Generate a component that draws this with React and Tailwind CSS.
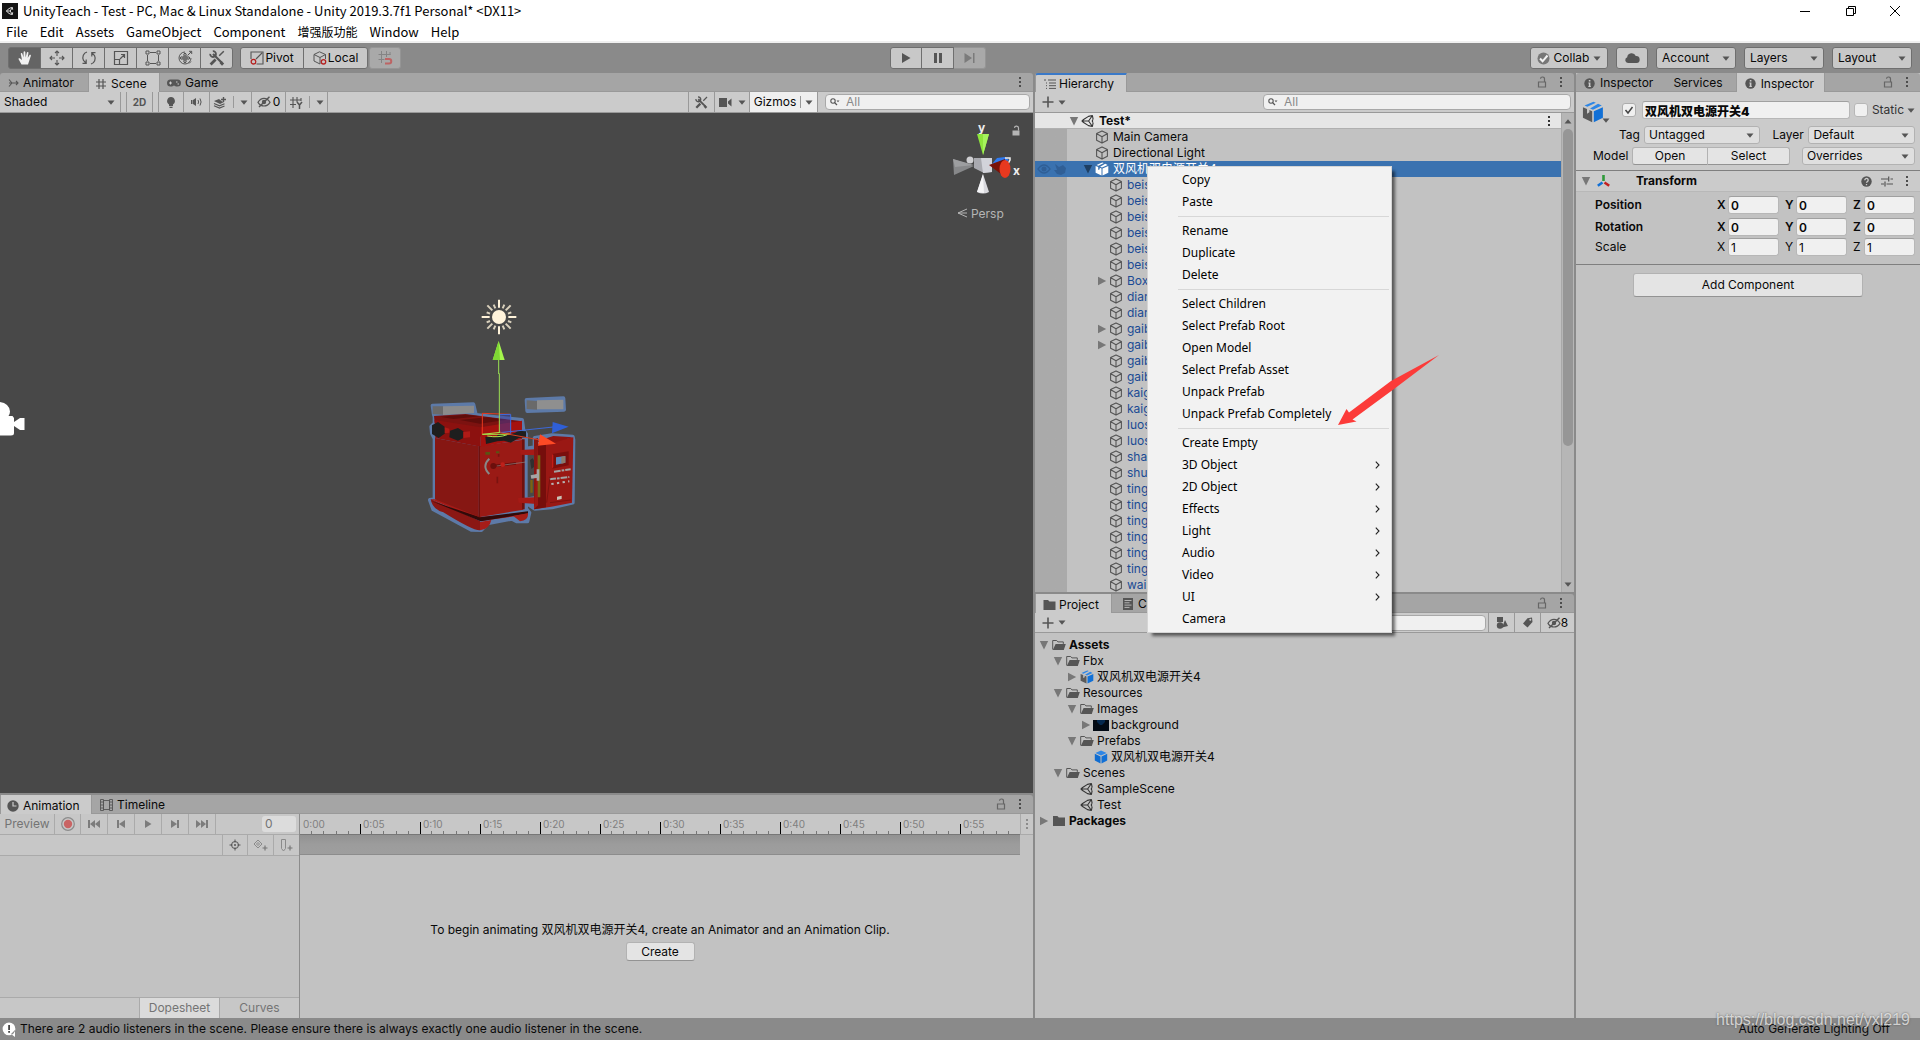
import React from "react";

/* ---------- icons ---------- */
const Svg = ({ w = 16, h = 16, box, children, className = "" }) => (
  <svg width={w} height={h} viewBox={box || `0 0 ${w} ${h}`} fill="none" className={"shrink-0 " + className} aria-hidden="true">
    {children}
  </svg>
);
const Caret = ({ className = "" }) => (
  <Svg w={8} h={5} className={className}><path d="M0.5 0.5h7L4 4.8z" fill="#555" /></Svg>
);
const Fold = ({ open }) =>
  open ? <Svg w={10} h={10}><path d="M0.8 1h8.4L5 9.5z" fill="#777" /></Svg>
       : <Svg w={10} h={10}><path d="M1 0.8v8.4L9.2 5z" fill="#777" /></Svg>;
const Kebab = ({ color = "#4d4d4d" }) => (
  <Svg w={4} h={12}><path d="M1 1h2v2H1zM1 5h2v2H1zM1 9h2v2H1z" fill={color} /></Svg>
);
const Lock = ({ color = "#666" }) => (
  <Svg w={10} h={12}><path d="M1.5 6h7v5h-7zM7.5 6V3.2a2 2 0 0 0-4-.4" stroke={color} strokeWidth="1.2" /></Svg>
);
const Cube = () => (
  <Svg w={14} h={14}><path d="M7 .9l5.4 2.7v6.6L7 13.1 1.6 10.2V3.6zM1.8 3.8L7 6.7l5.2-2.9M7 6.7v6.2" stroke="#555" strokeWidth="1.1" strokeLinejoin="round" /></Svg>
);
const PrefabCube = () => (
  <Svg w={14} h={14}>
    <path d="M7 .5l5.6 2.4L7 5.6 1.4 2.9z" fill="#2d86e6" />
    <path d="M.8 3.7l5.7 2.7v7.2L.8 10.6z" fill="#0f6cd0" /><path d="M13.2 3.7L7.5 6.4v7.2l5.7-3z" fill="#1170d6" />
  </Svg>
);
const ModelCube = ({ size = 14, dark = "#5a5a5a", blue = "#1170d6", light = "#2d86e6" }) => (
  <Svg w={size} h={size} box="0 0 14 14">
    <path d="M5.4 1.2L7.3.4l1.5.7-5.4 2.6-1.8-.8zM10.2 1.7l2.4 1.2L7 5.6l-1.9-.9z" fill={light} />
    <path d="M.6 3.9l2.6 1.2v3l1.5-.9V5.8l1.8.8v7L.6 10.7z" fill={dark} />
    <path d="M13.3 3.9L7.5 6.6v7l5.8-2.9z" fill={blue} />
  </Svg>
);
const UnityIcon = ({ color = "#333" }) => (
  <Svg w={14} h={14}>
    <path d="M12.1 5.2l-.7-3.7-3.9.9L2.6 5.5 1 7l1.6 1.5 4.9 3.1 3.9.9.7-3.7M11.4 1.5L7.6 7l3.8 5.5M7.6 7H1M12.1 5.2L11.2 7l.9 1.8" stroke={color} strokeWidth="1.1" strokeLinejoin="round" />
  </Svg>
);
const FolderOpen = () => (
  <Svg w={14} h={12}><path d="M.7 10.5V1.5h4l1.2 1.4h5.4v2" stroke="#555" strokeWidth="1" /><path d="M3.6 5h10.2l-2 6H.8z" fill="#555" /></Svg>
);
const Folder = () => (
  <Svg w={14} h={12}><path d="M1 1h4.4l1.4 1.6H13V11H1z" fill="#555" /></Svg>
);
const Thumb = () => (
  <Svg w={16} h={11}><path d="M0 0h16v11H0z" fill="#020a14" /><path d="M4 0h8v2l-3 3H7L4 2z" fill="#04284e" /></Svg>
);
const SearchGlyph = () => (
  <Svg w={10} h={8}><circle cx="3" cy="3" r="2.2" stroke="#555" strokeWidth="1.1" /><path d="M4.6 4.6L7 7" stroke="#555" strokeWidth="1.3" /><path d="M6.5 2.5h3L8 4.3z" fill="#555" /></Svg>
);
const Plus = () => <Svg w={12} h={12}><path d="M6 .5v11M.5 6h11" stroke="#555" strokeWidth="1.6" /></Svg>;
const ToolsIcon = ({ size = 16 }) => (
  <Svg w={size} h={size} box="0 0 16 16">
    <path d="M4 4l8.8 8.8" stroke="#555" strokeWidth="2.2" /><path d="M1.2 3.8A2.9 2.9 0 1 0 3.8 1.2" stroke="#555" strokeWidth="1.8" />
    <path d="M14.8 1.2l-4.6 4.6" stroke="#555" strokeWidth="1.5" /><path d="M1.6 14.4l5-5" stroke="#555" strokeWidth="2.8" />
    <path d="M11.5 12l2.6 2.6" stroke="#555" strokeWidth="3" />
  </Svg>
);
const EyeOff = () => (
  <Svg w={14} h={12}><path d="M1 6.4C2.6 3.6 4.8 2.4 7 2.4s4.400 1.200 6 4C11.400 9 9.200 10 7 10S2.600 9 1 6.400z" stroke="#555" strokeWidth="1.200" /><circle cx="7" cy="6" r="2.200" fill="#555" /><path d="M2 11L12.500.8" stroke="#555" strokeWidth="1.500" /></Svg>
);
const Info = () => (
  <Svg w={11} h={11}><circle cx="5.5" cy="5.5" r="5.2" fill="#555" /><path d="M4.8 2h1.600v1.500H4.800zM4.400 4.600h2v3.600h.6v.9H4.200v-.9h.6V5.500h-.4z" fill="#ccc" /></Svg>
);

/* ---------- shared pieces ---------- */
const TabTools = ({ lock = true }) => (
  <div className="ml-auto flex items-center gap-3 pr-[11px]">
    {lock && <button aria-label="Lock"><Lock /></button>}
    <button aria-label="Panel menu"><Kebab /></button>
  </div>
);
const TabBar = ({ children }) => (
  <div role="tablist" className="flex h-[19px] shrink-0 items-stretch rounded-t-[3px] bg-[#a5a5a5]">{children}</div>
);
const Tab = ({ icon, label, active, className = "" }) => (
  <button
    role="tab"
    aria-selected={!!active}
    className={(active ? "border-x border-[#999] bg-[#cbcbcb] " : "border-b border-b-[#999] ") + "flex items-center pt-0.5 leading-4 whitespace-nowrap " + className}
  >
    {icon}{label}
  </button>
);
const Fill = ({ children }) => <div className="flex flex-1 border-b border-[#999]">{children}</div>;
const Search = ({ className = "", label, placeholder = "All" }) => (
  <label className={"flex h-4 items-center gap-1.5 rounded border border-[#a8a8a8] bg-[#f0f0f0] px-1 " + className}>
    <SearchGlyph />
    <input aria-label={label} placeholder={placeholder} className="w-0 min-w-0 flex-1 bg-transparent leading-[14px] outline-none placeholder:text-[#8a8a8a]" />
  </label>
);
const Drop = ({ label, value, className = "", look = "rounded-[3px] border border-[#b2b2b2] bg-[#dfdfdf]" }) => (
  <div className={"relative flex items-center " + look + " " + className}>
    <select aria-label={label} defaultValue={value} className="h-full w-full appearance-none bg-transparent pl-1 leading-4 outline-none">
      <option>{value}</option>
    </select>
    <Caret className="pointer-events-none absolute right-[5px]" />
  </div>
);

/* ---------- window chrome ---------- */
const Chrome = () => (
  <header className="shrink-0 border-b-2 border-[#f0f0f0] bg-white font-['Noto_Sans_CJK_SC',sans-serif] text-[13px] text-black">
    <div className="flex h-[22px] items-center pl-0.5">
      <Svg w={16} h={16}>
        <path d="M0 0h16v16H0z" fill="#151515" />
        <path d="M10.700 6.700l-.4-2.200-2.300.5L5.500 6.700 4.500 8l1 1.300L8 11l2.300.5.4-2.200M10.300 4.500L8.200 8l2.100 3.500M8.200 8H4.500" stroke="#ddd" strokeWidth="1" />
      </Svg>
      <span className="ml-[5px] flex-1 leading-4 whitespace-nowrap">UnityTeach - Test - PC, Mac &amp; Linux Standalone - Unity 2019.3.7f1 Personal* &lt;DX11&gt;</span>
      <div className="flex">
        <button aria-label="Minimize" className="flex w-[46px] justify-center"><Svg w={10} h={10}><path d="M0 5.500h10" stroke="#000" /></Svg></button>
        <button aria-label="Restore" className="flex w-[46px] justify-center"><Svg w={10} h={10}><path d="M.5 2.500h7v7h-7zM2.500 2.500v-2h7v7h-2" stroke="#000" /></Svg></button>
        <button aria-label="Close" className="flex w-[46px] justify-center pr-1"><Svg w={10} h={10}><path d="M0 0l10 10M10 0L0 10" stroke="#000" /></Svg></button>
      </div>
    </div>
    <nav className="flex h-[19px] items-center gap-3 pl-1.5">
      {["File", "Edit", "Assets", "GameObject", "Component", "增强版功能", "Window", "Help"].map((m) => (
        <button key={m} className={(m === "增强版功能" ? "text-[12px] " : "") + "leading-4"}>{m}</button>
      ))}
    </nav>
  </header>
);

/* ---------- main toolbar ---------- */
const toolIcons = [
  ["Hand tool", <path key="a" d="M4.500 14.500L1.600 9.300c-.4-1 .8-1.500 1.500-.7L5 10 3.800 4c-.1-1.100 1.300-1.300 1.600-.3L6.500 7.500 6.600 2c.1-1 1.600-1 1.700 0l.3 5.400L9.900 2.600c.3-1 1.700-.7 1.500.4l-.7 5 1.800-2.900c.6-.8 1.700-.2 1.300.8L12 11.500l-1 3z" fill="#f2f2f2" />],
  ["Move tool", <path key="a" d="M8 1v5M8 10v5M1 8h5M10 8h5M6 3l2-2 2 2M6 13l2 2 2-2M3 6L1 8l2 2M13 6l2 2-2 2" stroke="#555" strokeWidth="1.100" />],
  ["Rotate tool", <path key="a" d="M6 2C2.500 3 .8 7 2.500 10.500L5 13M5.200 9.500V13.300H1.500M10 14c3.500-1 5.200-5 3.500-8.500L11 3M10.800 6.500V2.700h3.700" stroke="#555" strokeWidth="1.200" />],
  ["Scale tool", <path key="a" d="M1.500 1.500h13v13h-13zM1.500 9.500h5v5M7 9l4.500-4.500M8 4.500h3.500V8" stroke="#555" strokeWidth="1.200" />],
  ["Rect tool", <path key="a" d="M1 1h3v3H1zM12 1h3v3h-3zM1 12h3v3H1zM12 12h3v3h-3zM5 2.500h6M5 13.500h6M2.500 5v6M13.500 5v6" stroke="#555" strokeWidth="1" />],
  ["Transform tool", <path key="a" d="M14 8A6 6 0 1 1 8 2M8 3v10M3 8h10M6.300 4.600L8 3l1.700 1.600M6.300 11.400L8 13l1.700-1.600M4.600 6.300L3 8l1.600 1.700M11.400 6.300L13 8l-1.600 1.700M6 6h4v4H6zM10.500 5.500l4-4M12 1.300h2.700V4M12 13.500l2-2" stroke="#555" strokeWidth="1" />],
];
const tb = "flex h-[22px] items-center justify-center border border-[#6f6f6f] bg-[#c8c8c8] ";
const Toolbar = () => (
  <div className="grid h-[30px] shrink-0 grid-cols-[1fr_auto_1fr] items-center bg-[#8a8a8a]">
    <div className="flex items-center pl-2">
      {toolIcons.map(([name, shape], i) => (
        <button key={name} aria-label={name} className={(i === 0 ? "rounded-l-[3px] bg-[#646464] " : "-ml-px bg-[#c8c8c8] ") + "flex h-[22px] w-[33px] items-center justify-center border border-[#6f6f6f]"}>
          <Svg>{shape}</Svg>
        </button>
      ))}
      <button aria-label="Custom tools" className={tb + "-ml-px w-[33px] rounded-r-[3px]"}><ToolsIcon /></button>
      <button className={tb + "ml-[7px] w-[64px] gap-px rounded-l-[3px]"}>
        <Svg w={14} h={14}><path d="M1 8V1h12v12H6.500M6 8l6-6" stroke="#555" strokeWidth="1.100" /><circle cx="3.500" cy="10.700" r="2.300" stroke="#b52222" strokeWidth="1.300" /></Svg>Pivot
      </button>
      <button className={tb + "-ml-px w-[65px] gap-px rounded-r-[3px]"}>
        <Svg w={14} h={14}><path d="M7 13L1 10V3.500L6.500.8l6 2.700V8M1 3.500l6 3 5.500-3M7 6.500V13" stroke="#555" strokeWidth="1" /><circle cx="10.500" cy="10.800" r="2.200" stroke="#b52222" strokeWidth="1.300" /></Svg>Local
      </button>
      <button aria-label="Grid snapping" className="ml-px flex h-[22px] w-8 items-center justify-center rounded-[3px] border border-[#959595] bg-[#a9a9a9]">
        <Svg><path d="M1.500 4.500h12M1.500 9.500h6M4.500 1v12M9.500 1v6M13 2v3" stroke="#848484" /><path d="M8 9h4a2 2 0 0 1 0 4.500H8" stroke="#bd6464" strokeWidth="2" /></Svg>
      </button>
    </div>
    <div className="mr-11 flex">
      <button aria-label="Play" className={tb + "w-8 rounded-l-[3px]"}><Svg w={10} h={12}><path d="M1 1l8.500 5L1 11z" fill="#555" /></Svg></button>
      <button aria-label="Pause" className={tb + "-ml-px w-[33px]"}><Svg w={10} h={12}><path d="M1 1h3v10H1zM6 1h3v10H6z" fill="#555" /></Svg></button>
      <button aria-label="Step" className="flex h-[22px] w-8 items-center justify-center rounded-r-[3px] border border-l-0 border-[#959595] bg-[#a9a9a9]"><Svg w={11} h={12}><path d="M.5 1l7.500 5-7.500 5zM9 1h1.500v10H9z" fill="#7b7b7b" /></Svg></button>
    </div>
    <div className="flex items-center justify-end gap-2 pr-2">
      <button className={tb + "w-[78px] gap-1 rounded-[3px]"}>
        <Svg w={13} h={13}><circle cx="6.500" cy="6.500" r="6" fill="#777" /><path d="M3 6.500l2.600 2.800L10.500 3.500" stroke="#f2f2f2" strokeWidth="2" /></Svg>Collab<Caret />
      </button>
      <button aria-label="Cloud services" className={tb + "w-8 rounded-[3px]"}>
        <Svg w={16} h={12}><path d="M4 11a3 3 0 0 1-.8-5.800A4.500 4.500 0 0 1 11.800 4 3.500 3.500 0 0 1 12.500 11z" fill="#555" /></Svg>
      </button>
      {["Account", "Layers", "Layout"].map((t) => (
        <button key={t} className={tb + "w-20 justify-between rounded-[3px] px-[5px]"}><span className="flex-1 text-left">{t}</span><Caret /></button>
      ))}
    </div>
  </div>
);

/* ---------- scene ---------- */
const Device = () => (
  <Svg w={200} h={270} box="0 0 600 810" className="absolute top-[167px] left-[400px]">
    {/* sun gizmo */}
    <circle cx="297" cy="111" r="21" fill="#fff3da" />
    <path d="M297 59v24M297 139v24M245 111h24M325 111h24" stroke="#fff3da" strokeWidth="6" />
    <path d="M262 76l15 15M317 131l15 15M332 76l-15 15M277 131l-15 15M281 74l5 11M313 74l-5 11M281 148l5-11M313 148l-5-11M260 97l10 4M334 97l-10 4M260 127l10-4M334 127l-10-4" stroke="#d9d0bc" strokeWidth="6" />
    {/* selection outline */}
    <g stroke="#5d7aa8" strokeWidth="12" strokeLinejoin="round" fill="#5d7aa8">
      <path d="M98 377l122-4 6 26-124 6zM380 360l110-5 2 34-110 4z" />
      <path d="M104 408L194 401 366 420 370 450 378 462V506L404 502V474L456 466 518 470 520 480 518 668 456 682 404 686 378 668V686L388 698 382 724 350 724 336 716 262 730 244 750 214 749 100 688 90 660 104 658V476L96 460 94 440 104 430z" />
    </g>
    <path d="M383 510v142l20-3V520z" fill="#484848" />
    <path d="M98 379h31v25l-31-2z" fill="#6a6a6a" /><path d="M129 379l93-2v22l-93 6z" fill="#8b8b8b" />
    <path d="M380 361l31 2v26l-31-2z" fill="#6a6a6a" /><path d="M411 361l79-2v29h-79z" fill="#8f8f8f" />
    {/* skids */}
    <path d="M92 657l148 66v28q-20 2-110-54-34-10-38-40z" fill="#8b1714" />
    <path d="M92 657l28 2 124 52 140-14v6l-140 20z" fill="#a51b17" /><path d="M92 662l150 62 142-24v-6l-144 18z" fill="#310a09" />
    <path d="M240 726l34-6q-6 28-34 31zM340 708l44-8q2 22-24 24z" fill="#a61d18" />
    {/* cabinet */}
    <path d="M105 474l131 25v211l-131-52z" fill="#861713" /><path d="M236 499l134-20v210l-134 23z" fill="#9a1a15" />
    <path d="M102 408l94-6 170 22v26l-126 20-136-42z" fill="#7c1210" /><path d="M104 420l138 22v58L106 474z" fill="#8c110f" />
    <path d="M242 442l124-20v56l-124 22z" fill="#a5120f" />
    <path d="M120 410l80-6 40 5-80 8zM180 420l80-8 60 7-80 12z" fill="#5f0d0b" />
    <path d="M366 478h8v210h-8zM236 499h4v212h-4z" fill="#6e110e" />
    <g fill="#1e1e1e">
      <path d="M96 436l18-10 20 14 2 20-20 14-20-12zM150 452l24-8 16 10v20l-16 8-26-10z" />
      <path d="M256 470l30 2 14-12 20 6 26-8 8-6 24 2v18l-22 2-24 14-20-6-20 2-34 8z" />
    </g>
    <path d="M134 442l14 4v12l-14 2zM190 456l20-2v18l-20 2z" fill="#b01b17" />
    <path d="M256 516h14v8h-14zM288 514h10v6h-10z" fill="#5a5413" />
    <path d="M268 536q-24 22 0 46" stroke="#888" strokeWidth="6" />
    <path d="M280 558l68-8" stroke="#6b0f0c" strokeWidth="8" /><path d="M290 558l88-12" stroke="#888" strokeWidth="2" />
    <circle cx="280" cy="558" r="9" fill="#6b0f0c" /><circle cx="308" cy="554" r="7" fill="#bf201a" /><path d="M296 530v-8M292 590v20" stroke="#7a1310" strokeWidth="5" />
    {/* hinge and door */}
    <path d="M360 510l44-2 8 6v12l-50-2zM354 654l50-2 20 6-12 14-56-4z" fill="#a61a16" />
    <path d="M390 540l8-5 4 6v20l-8 6z" fill="#303030" />
    <path d="M402 478l12-4v208l-12-2z" fill="#8a1512" />
    <path d="M414 492l106-20-4 196-62 12-52 8z" fill="#9a1814" /><path d="M414 492l24 2v188l-36 6 12-12z" fill="#760e0c" />
    <path d="M410 484l50-16 58 4-78 22z" fill="#8e1411" />
    <path d="M413 526h8v126h-8zM391 600h7v38h-7z" fill="#7a6413" /><path d="M392 586l18-4v-14h8v34h-8v-8l-16 2z" fill="#a5a5a5" />
    <path d="M456 522l50-8v42l-50 10z" fill="#7a0f0d" /><path d="M456 522l4 3v36l-4 5z" fill="#c41d18" />
    <path d="M468 532l28-4v20l-28 6z" fill="#5d88b8" /><path d="M484 530l12-2v20l-12 3z" fill="#8d7b6a" />
    <path d="M462 575l50-7M448 598l60-7" stroke="#a3a3a3" strokeWidth="6" strokeDasharray="20 3 8 3" /><path d="M454 612l54-8" stroke="#b7b7b7" strokeWidth="6" strokeDasharray="7 10" />
    <path d="M450 590l-10 78M450 668l62-8" stroke="#7d110e" strokeWidth="3" /><path d="M471 650l14-3v10l-14 3z" fill="#c9c2b6" />
    {/* transform handles */}
    <path d="M300 404l32-2v54l-32 4z" fill="#3c3ca0" fillOpacity=".5" />
    <path d="M247 462v-62l84 3" stroke="#e8391f" strokeWidth="3" /><path d="M300 404l32-1v58" stroke="#3a6be0" strokeWidth="3" />
    <path d="M247 463h84l-30-6zM262 468q34 6 60-4" stroke="#a6e34a" strokeWidth="3" />
    <path d="M298 458V280M296 282v-44" stroke="#9adf52" strokeWidth="3" /><path d="M296 183l18 57h-36z" fill="#a4f64c" /><path d="M296 183l4 57h-22z" fill="#7fd834" />
    <path d="M300 458l160-17" stroke="#3d69d8" strokeWidth="3" /><path d="M506 440l-50 20 2-34z" fill="#2f5fd6" />
    <path d="M300 458l120 22" stroke="#d63e22" strokeWidth="3" /><path d="M468 491l-48-28-6 34z" fill="#ff4a25" />
  </Svg>
);
const Orient = () => (
  <Svg w={88} h={108} className="absolute top-1 right-0">
    <text x="33" y="15" fill="#eee" fontSize="12" fontWeight="700">y</text>
    <path d="M32 17h12l-6 21z" fill="#8ee53c" /><path d="M38 17h6l-6 21z" fill="#a6f45c" />
    <circle cx="25" cy="43" r="3.500" fill="#cfcfd2" />
    <path d="M8 42l21 7-20 9z" fill="#87888a" /><path d="M8 42l21 6-19 2z" fill="#9d9ea0" />
    <path d="M29 41h18v14l-8 1-10-5z" fill="#a9aab0" /><path d="M36 41h11v14l-9 1z" fill="#d2d3da" />
    <path d="M47 47l5-6 8-1 4 3-8 5z" fill="#2f7af0" /><path d="M60 41h5v2l-2 4" stroke="#eee" strokeWidth="1.500" />
    <path d="M44 48l16-6v18z" fill="#7a1208" /><ellipse cx="60" cy="52" rx="5.500" ry="9" fill="#e8391f" />
    <path d="M38 57l6 18q-6 3-12 0z" fill="#d9d9de" /><path d="M38 57l1 19-7-1z" fill="#f4f4f6" />
    <text x="68" y="58" fill="#eee" fontSize="12" fontWeight="700">x</text>
    <path d="M67.500 13.500h7v5h-7z" fill="#b5b5b5" /><path d="M73.500 13.500v-2.200a2 2 0 0 0-4-.4" stroke="#b5b5b5" strokeWidth="1.200" />
    <path d="M22 92l-9 4 9 4M13 96h9" stroke="#b5b5b5" /><text x="26" y="101" fill="#b5b5b5" fontSize="12">Persp</text>
  </Svg>
);
const cell = "flex items-center justify-center border-r border-[#999] ";
const Scene = () => (
  <section className="flex min-h-0 min-w-0 flex-col">
    <TabBar>
      <Fill>
        <Tab label="Animator" className="-mb-px w-[88px] gap-1 pl-2" icon={<Svg w={11} h={10}><path d="M1 1.500l3 3.500M1 8.500L4 5h6M8 3l2 2-2 2M1 5h3" stroke="#555" strokeWidth="1.100" /></Svg>} />
        <Tab active label="Scene" className="-mb-px w-[72px] gap-1 pl-1.5" icon={<Svg w={12} h={12}><path d="M1 4h10M1 8h10M4 1v10M8 1v10" stroke="#555" strokeWidth="1.200" /></Svg>} />
        <Tab label="Game" className="-mb-px gap-1 pl-[7px]" icon={<Svg w={14} h={10}><path d="M3.500 1.500h7a3.500 3.500 0 0 1 0 7H9L7 7.500 5 8.500H3.500a3.500 3.500 0 0 1 0-7z" fill="#555" /><path d="M2 5h3M3.500 3.500v3M9 4h1.500M10.500 6H12" stroke="#ccc" /></Svg>} />
        <TabTools lock={false} />
      </Fill>
    </TabBar>
    <div className="flex h-[21px] shrink-0 items-stretch border-b border-[#999] bg-[#cbcbcb]">
      <Drop label="Draw mode" value="Shaded" look="border-r border-[#999]" className="w-[121px]" />
      <span className="w-[6px] border-r border-[#999]" />
      <button className={cell + "w-[26px] text-[10px] font-bold text-[#555]"}>2D</button>
      <span className="w-[6px] border-r border-[#999]" />
      <button aria-label="Lighting" className={cell + "w-[25px]"}><Svg w={10} h={13}><path d="M5 1a4 4 0 0 1 2 7.400V10H3V8.400A4 4 0 0 1 5 1zM3.500 10.800h3V12h-3z" fill="#555" /></Svg></button>
      <button aria-label="Audio" className={cell + "w-[26px]"}><Svg w={13} h={10}><path d="M1 3h1.500v4H1zM3 3l3-2v8L3 7z" fill="#555" /><path d="M8 3q1.200 2 0 4M10 1.500q2.200 3.500 0 7" stroke="#555" /></Svg></button>
      <button aria-label="Effects" className={cell + "w-[42px] gap-1.5"}><Svg w={14} h={13}><path d="M1 5l5-2 3 2.500L11 6 7 8z" fill="#555" /><path d="M1 7.500L6.500 9.800l5-2M1 9.800L6.500 12l5-2" stroke="#555" strokeWidth="1.200" /><path d="M10.500 1v5M8 3.500h5" stroke="#555" strokeWidth="1.400" /></Svg><span className="h-3 w-px bg-[#999]" /><Caret /></button>
      <button className={cell + "w-[34px] gap-0.5"}><EyeOff />0</button>
      <button aria-label="Grid" className={cell + "w-[42px] gap-1.5"}><Svg w={14} h={13}><path d="M1 4h11M1 8.500h6M4 1v11M8 1v5M12 2v3" stroke="#555" strokeWidth="1.100" /><path d="M8 6l2.500 3L13 6M10.500 9v4" stroke="#555" strokeWidth="1.500" /></Svg><span className="h-3 w-px bg-[#999]" /><Caret /></button>
      <div className="ml-auto flex border-l border-[#999]">
        <button aria-label="Component tools" className={cell + "w-[26px]"}><ToolsIcon size={13} /></button>
        <button aria-label="Camera settings" className={cell + "w-[35px] gap-1.5"}><Svg w={13} h={9}><path d="M0 0h8v9H0zM9 3.500L12.500.5v8L9 5.500z" fill="#555" /></Svg><Caret /></button>
        <button className={cell + "w-[68px] gap-1 bg-[#efefef]"}>Gizmos<span className="h-3 w-px bg-[#999]" /><Caret /></button>
        <Search label="Search scene" className="mt-0.5 mr-[3px] ml-[7px] w-[205px]" />
      </div>
    </div>
    <div className="relative min-h-0 flex-1 overflow-hidden bg-[#484848]">
      <Device />
      <Orient />
      <Svg w={26} h={38} className="absolute top-[287px] left-0">
        <path d="M0 2q9 1 10 9.500 0 2-1.500 4.500h4l1.500 2v4l6-4h4.500v12H20l-6-4v7q0 2.500-3 2.500H0z" fill="#fff" />
      </Svg>
    </div>
  </section>
);

/* ---------- animation ---------- */
const transport = [
  ["First key", "M1 1h2v8H1zM3 5l5-4v8zM8 5l5-4v8z", 14],
  ["Previous key", "M1 1h2v8H1zM3 5l6-4v8z", 10],
  ["Play animation", "M2 1l6.500 4L2 9z", 10],
  ["Next key", "M1 1l6 4-6 4zM7 1h2v8H7z", 10],
  ["Last key", "M1 1l5 4-5 4zM6 1l5 4-5 4zM11 1h2v8h-2z", 14],
];
const thin = "flex items-center justify-center border-l border-[#aaa] ";
const Animation = () => (
  <section className="flex min-h-0 min-w-0 flex-col">
    <TabBar>
      <Fill>
        <Tab active label="Animation" className="-mb-px w-[92px] gap-1 pl-1.5" icon={<Svg w={12} h={12}><circle cx="6" cy="6" r="5.700" fill="#555" /><path d="M6 2v4h3.500" stroke="#ccc" strokeWidth="1.200" /></Svg>} />
        <Tab label="Timeline" className="-mb-px gap-1 pl-2" icon={<Svg w={13} h={12}><path d="M3.500 1.500h6v9h-6zM.5 .5h3v11h-3zM9.500.5h3v11h-3z" stroke="#555" strokeWidth=".9" /><path d="M.5 3h3M.5 6h3M.5 9h3M9.500 3h3M9.500 6h3M9.500 9h3" stroke="#555" strokeWidth=".9" /></Svg>} />
        <TabTools />
      </Fill>
    </TabBar>
    <div className="flex min-h-0 flex-1">
      <div className="flex w-[300px] shrink-0 flex-col border-r border-[#8c8c8c] bg-[#c2c2c2] text-[#747474]">
        <div className="flex h-[21px] items-stretch border-b border-[#aaa] bg-[#c7c7c7]">
          <button className="w-[54px]">Preview</button>
          <button aria-label="Record" className={thin + "w-[26px]"}><Svg w={14} h={14}><circle cx="7" cy="7" r="6.300" stroke="#8b8b8b" strokeWidth="1.200" /><circle cx="7" cy="7" r="4.200" fill="#c96464" /></Svg></button>
          {transport.map(([n, d, w]) => (
            <button key={n} aria-label={n} className={thin + "w-[27px]"}><Svg w={w} h={10}><path d={d} fill="#7c7c7c" /></Svg></button>
          ))}
          <span className="w-px bg-[#aaa]" />
          <input aria-label="Frame" defaultValue="0" className="my-[2px] mr-[3px] ml-auto w-[34px] rounded-[3px] bg-[#dcdcdc] px-[3px] outline-none" />
        </div>
        <div className="flex h-[21px] justify-end border-b border-[#aaa] bg-[#c7c7c7]">
          <button aria-label="Filter by selection" className={thin + "w-[25px]"}><Svg w={12} h={12}><circle cx="6" cy="6" r="3.500" stroke="#555" /><circle cx="6" cy="6" r="1" fill="#555" /><path d="M6 .5v3M6 8.500v3M.5 6h3M8.500 6h3" stroke="#555" /></Svg></button>
          <button aria-label="Add keyframe" className={thin + "w-[26px]"}><Svg w={15} h={12}><path d="M5 1l4 4-4 4-4-4zM5 3.500L6.500 5 5 6.500 3.500 5z" stroke="#8a8a8a" /><path d="M12 6.500v5M9.500 9h5" stroke="#777" strokeWidth="1.200" /></Svg></button>
          <button aria-label="Add event" className={thin + "w-[26px]"}><Svg w={13} h={13}><path d="M1.500.5h4v9l-2 2.500-2-2.500z" stroke="#8a8a8a" /><path d="M10 6.500v5M7.500 9h5" stroke="#777" strokeWidth="1.200" /></Svg></button>
        </div>
        <div className="flex-1" />
        <div className="flex h-[21px] justify-end border-t border-[#aaa] bg-[#c7c7c7]">
          <button className={thin + "w-20 bg-[#dbdbdb]"}>Dopesheet</button>
          <button className={thin + "w-20"}>Curves</button>
        </div>
      </div>
      <div className="flex min-w-0 flex-1 flex-col bg-[#c2c2c2]">
        <div className="flex">
          <div className="flex min-w-0 flex-1 flex-col">
            <div className="grid h-[21px] grid-cols-12 border-b border-[#777] bg-[#c7c7c7]">
              {["0:00", "0:05", "0:10", "0:15", "0:20", "0:25", "0:30", "0:35", "0:40", "0:45", "0:50", "0:55"].map((t, i) => (
                <div key={t} className="relative">
                  <span className="absolute top-0.5 left-[3px] text-[10px] leading-4 text-[#808080]">{t}</span>
                  <div className="flex h-full items-end">
                    <span className="flex flex-1 items-end"><i className={(i === 0 ? "h-0" : i % 2 ? "h-2.5" : "h-3") + " w-px bg-black"} /></span>
                    {[1, 2, 3, 4].map((n) => <span key={n} className="h-[3px] flex-1 border-l border-[#777]" />)}
                  </div>
                </div>
              ))}
            </div>
            <div className="h-5 border-b border-[#8c8c8c] bg-linear-to-b from-[#929292] via-[#9c9c9c] to-[#9e9e9e]" />
          </div>
          <div className="w-[13px]"><button aria-label="Timeline options" className="flex h-[21px] w-full items-center justify-center border-b border-l border-[#aaa] bg-[#c7c7c7]"><Kebab color="#8c8c8c" /></button></div>
        </div>
        <div className="flex flex-1 flex-col items-center justify-center gap-1 pt-2.5 pr-[13px]">
          <p className="leading-4">To begin animating 双风机双电源开关4, create an Animator and an Animation Clip.</p>
          <button className="h-[19px] w-[69px] rounded-[3px] border border-[#b2b2b2] border-b-[#939393] bg-[#e4e4e4] leading-4">Create</button>
        </div>
      </div>
    </div>
  </section>
);

/* ---------- hierarchy ---------- */
const children = ["beis", "beis", "beis", "beis", "beis", "beis", "+Box", "dian", "dian", "+gaib", "+gaib", "gaib", "gaib", "kaig", "kaig", "luos", "luos", "sha", "shu", "ting", "ting", "ting", "ting", "ting", "ting", "wai"];
const menu = [
  "Copy", "Paste", null, "Rename", "Duplicate", "Delete", null, "Select Children", "Select Prefab Root", "Open Model", "Select Prefab Asset",
  "Unpack Prefab", "Unpack Prefab Completely", null, "Create Empty", "3D Object>", "2D Object>", "Effects>", "Light>", "Audio>", "Video>", "UI>", "Camera",
];
const HRow = ({ pad, arrow, icon, text, className = "" }) => (
  <div role="treeitem" className={"flex h-4 items-center " + className}>
    <span className={pad} />
    <span className="flex w-[13px] shrink-0 justify-center">{arrow}</span>
    <span className="mr-[3px] flex w-4 shrink-0 justify-center">{icon}</span>
    <span className="leading-4 whitespace-nowrap">{text}</span>
  </div>
);
const ContextMenu = () => (
  <div role="menu" className="absolute top-[93px] left-28 z-20 w-[245px] border border-[#d5d5d5] bg-[#f2f2f2] py-0.5 font-['Noto_Sans',sans-serif] text-[12px] text-black shadow-[4px_4px_3px_-1px_rgba(0,0,0,0.55)]">
    {menu.map((m, i) =>
      m === null ? (
        <div key={i} role="separator" className="mr-0.5 ml-[30px] flex h-[7px] items-center"><span className="h-px w-full bg-[#d7d7d7]" /></div>
      ) : (
        <button key={i} role="menuitem" className="flex h-[22px] w-full items-center justify-between pr-[11px] pl-[34px] leading-[22px]">
          {m.replace(">", "")}
          {m.endsWith(">") && <Svg w={5} h={8}><path d="M.8.600L4 4 .8 7.400" stroke="#222" strokeWidth="1.100" /></Svg>}
        </button>
      )
    )}
  </div>
);
const Hierarchy = () => (
  <section className="relative flex min-h-0 min-w-0 flex-col">
    <TabBar>
      <Tab active label="Hierarchy" className="w-[92px] gap-[3px] rounded-tl-[3px] border-t-2 border-t-[#3a79c8] !pt-0 pl-2" icon={<Svg w={12} h={10}><path d="M0 1h2M4 1h8M2 4h1M5 4h7M2 6.700h1M5 6.700h7M2 9.400h1M5 9.400h7" stroke="#555" /></Svg>} />
      <Fill><TabTools /></Fill>
    </TabBar>
    <div className="flex h-[21px] shrink-0 items-center border-b border-[#999] bg-[#cbcbcb] pr-[3px] pl-[7px]">
      <button aria-label="Create object" className="flex items-center gap-1"><Plus /><Caret /></button>
      <Search label="Search hierarchy" className="ml-auto w-[308px]" />
    </div>
    <div className="flex min-h-0 flex-1 bg-[#c2c2c2]">
      <div role="tree" className="min-w-0 flex-1 overflow-hidden bg-linear-to-r from-[#aaa] from-[32px] to-[#c2c2c2] to-[32px] text-[#1a4a94]">
        <div className="flex items-center border-b border-[#b0b0b0] bg-[#e6e6e6] text-[#090909]">
          <HRow pad="w-8" arrow={<Fold open />} icon={<UnityIcon />} text={<b>Test*</b>} className="flex-1 !h-[15px]" />
          <span className="pr-2.5"><Kebab color="#333" /></span>
        </div>
        <HRow pad="w-[46px]" icon={<Cube />} text="Main Camera" className="text-[#090909]" />
        <HRow pad="w-[46px]" icon={<Cube />} text="Directional Light" className="text-[#090909]" />
        <div className="relative flex h-4 items-center bg-[#3a72b0]">
          <span className="absolute left-0.5 flex gap-0.5">
            <Svg w={14} h={12}><path d="M1 6q6-8 12 0-6 8-12 0z" stroke="#305f96" strokeWidth="1.300" /><circle cx="7" cy="6" r="2.500" fill="#305f96" /></Svg>
            <Svg w={14} h={12}><path d="M2 1l4 3 4-2 3 3-1 5-4 2-4-1-3-4 3 0z" fill="#305f96" /></Svg>
          </span>
          <HRow pad="w-[46px]" arrow={<Svg w={10} h={10}><path d="M.8 1h8.400L5 9.500z" fill="#1e3f63" /></Svg>} icon={<ModelCube dark="#fff" blue="#fff" light="#fff" />} text="双风机双电源开关4" className="text-white" />
        </div>
        {children.map((c, i) => (
          <HRow key={i} pad="w-[60px]" arrow={c[0] === "+" ? <Fold /> : null} icon={<Cube />} text={c.replace("+", "")} />
        ))}
      </div>
      <div className="flex w-[13px] shrink-0 flex-col items-center border-l border-[#a8a8a8] bg-[#b6b6b6]">
        <span className="flex h-4 items-center"><Svg w={8} h={5}><path d="M.5 4.500h7L4 .3z" fill="#555" /></Svg></span>
        <span className="w-2.5 flex-[317] rounded-full bg-[#969696]" />
        <span className="flex-[130]" />
        <span className="flex h-4 items-center"><Caret /></span>
      </div>
    </div>
    <ContextMenu />
    <Svg w={115} h={80} className="pointer-events-none absolute top-[277px] left-[295px] z-30">
      <path d="M109 5L61 31 19 62.500 16.500 59 8 75l18.500-3.500-4-2L64 39z" fill="#fc3b39" />
    </Svg>
  </section>
);

/* ---------- project ---------- */
const CN = "双风机双电源开关4";
const tree = [
  ["w-0.5", true, <FolderOpen />, <b>Assets</b>],
  ["w-4", true, <FolderOpen />, "Fbx"],
  ["w-[30px]", false, <ModelCube />, CN],
  ["w-4", true, <FolderOpen />, "Resources"],
  ["w-[30px]", true, <FolderOpen />, "Images"],
  ["w-11", false, <Thumb />, "background"],
  ["w-[30px]", true, <FolderOpen />, "Prefabs"],
  ["w-11", null, <PrefabCube />, CN],
  ["w-4", true, <FolderOpen />, "Scenes"],
  ["w-[30px]", null, <UnityIcon />, "SampleScene"],
  ["w-[30px]", null, <UnityIcon />, "Test"],
  ["w-0.5", false, <Folder />, <b>Packages</b>],
];
const Project = () => (
  <section className="flex min-h-0 min-w-0 flex-col">
    <TabBar>
      <Tab active label="Project" className="w-[77px] gap-[3px] pl-[7px]" icon={<Svg w={13} h={12}><path d="M.5 1H5l1.500 1.600h6V11H.5z" fill="#555" /></Svg>} />
      <Fill>
        <Tab label="Console" className="-mb-px gap-1 pl-2.5" icon={<Svg w={12} h={12}><path d="M1 0h10v12H1z" fill="#555" /><path d="M2.500 2.500h7M2.500 4.800h5M2.500 7.100h7M2.500 9.400h5" stroke="#b5b5b5" /></Svg>} />
        <TabTools />
      </Fill>
    </TabBar>
    <div className="flex h-5 shrink-0 items-stretch border-b border-[#999] bg-[#cbcbcb] pl-[7px]">
      <button aria-label="Create asset" className="mr-auto flex items-center gap-1"><Plus /><Caret /></button>
      <Search label="Search project" placeholder="" className="mt-0.5 mr-0.5 w-[308px]" />
      <button aria-label="Search by type" className="flex w-[26px] items-center justify-center border-l border-[#999]"><Svg w={12} h={12}><path d="M1 0h6v5H1zM6 10.500L9 3l3 6z" fill="#555" /><circle cx="4" cy="8.500" r="3.200" fill="#555" /></Svg></button>
      <button aria-label="Search by label" className="flex w-[26px] items-center justify-center border-l border-[#999]"><Svg w={11} h={11}><path d="M5.500 1.200L10 .5l.5 4.500-5 5.500L1 6.500z" fill="#555" /><circle cx="8.300" cy="2.800" r="1" fill="#ccc" /></Svg></button>
      <button className="flex w-[34px] items-center justify-center border-l border-[#999]"><EyeOff />8</button>
    </div>
    <div role="tree" className="min-h-0 flex-1 bg-[#c2c2c2] pt-1">
      {tree.map(([pad, open, icon, text], i) => (
        <div key={i} role="treeitem" className="flex h-4 items-center">
          <span className={pad} />
          <span className="flex w-3.5 justify-center">{open !== null && <Fold open={open} />}</span>
          <span className="mr-0.5 flex w-4 justify-center">{icon}</span>
          <span className="leading-4">{text}</span>
        </div>
      ))}
    </div>
  </section>
);

/* ---------- inspector ---------- */
const field = "h-[18px] rounded-[3px] border border-[#b7b7b7] border-t-[#a0a0a0] bg-[#f0f0f0] px-0.5 leading-4 outline-none ";
const VecRow = ({ name, v, bold }) => (
  <div className={"flex items-center pr-[5px] pl-[19px] " + (bold ? "font-semibold" : "")}>
    <span className="w-[122px]">{name}</span>
    <div className="flex min-w-0 flex-1 gap-1.5">
      {["X", "Y", "Z"].map((a) => (
        <label key={a} className="flex min-w-0 flex-1 items-center">
          <span className="w-[11px]">{a}</span>
          <input aria-label={name + " " + a} defaultValue={v} className={field + "w-0 min-w-0 flex-1"} />
        </label>
      ))}
    </div>
  </div>
);
const btn = "h-[18px] border border-[#b2b2b2] border-b-[#939393] bg-[#e4e4e4] leading-4 ";
const Inspector = () => (
  <section className="flex min-h-0 min-w-0 flex-col bg-[#c2c2c2]">
    <TabBar>
      <Fill>
        <Tab label="Inspector" className="-mb-px gap-[5px] pl-2" icon={<Info />} />
        <Tab label="Services" className="-mb-px pl-5" />
        <Tab active label="Inspector" className="-mb-px ml-[13px] w-[89px] gap-[5px] pl-2" icon={<Info />} />
        <TabTools />
      </Fill>
    </TabBar>
    <div className="flex flex-col gap-[3px] border-b border-[#7f7f7f] bg-[#cbcbcb] pt-[9px] pr-[5px] pb-[5px]">
      <div className="flex items-start">
        <button aria-label="Object icon" className="-mb-2.5 ml-1.5 flex w-7 items-end"><ModelCube size={22} /><Caret className="-ml-0.5" /></button>
        <input type="checkbox" defaultChecked aria-label="Active" className="mt-0.5 ml-3 h-3.5 w-3.5 shrink-0 appearance-none rounded-[3px] border border-[#adadad] bg-[#f0f0f0]" />
        <Svg w={14} h={14} className="pointer-events-none mt-0.5 -ml-3.5"><path d="M3.500 7l2.500 3 4.500-6" stroke="#444" strokeWidth="1.500" /></Svg>
        <input aria-label="Object name" defaultValue={CN} className={field + "ml-1.5 w-0 min-w-0 flex-1 font-black"} />
        <label className="mt-0.5 ml-1 flex items-center gap-1 leading-[14px] text-[#333]">
          <input type="checkbox" className="h-3.5 w-3.5 appearance-none rounded-[3px] border border-[#b7b7b7] bg-[#f0f0f0]" />Static
        </label>
        <Caret className="mt-[7px] ml-[3px]" />
      </div>
      <div className="mt-1 flex items-center pl-[43px]">
        <span className="w-[25px]">Tag</span>
        <Drop label="Tag" value="Untagged" className="h-[18px] min-w-0 flex-[117]" />
        <span className="ml-3 w-9">Layer</span>
        <Drop label="Layer" value="Default" className="h-[18px] min-w-0 flex-[107]" />
      </div>
      <div className="flex items-center pl-[17px]">
        <span className="w-[39px]">Model</span>
        <button className={btn + "flex-[76] rounded-l-[3px]"}>Open</button>
        <button className={btn + "-ml-px flex-[83] rounded-r-[3px]"}>Select</button>
        <Drop label="Overrides" value="Overrides" className="ml-3 h-[18px] min-w-0 flex-[114]" />
      </div>
    </div>
    <div className="flex h-[21px] items-center border-b border-[#b8b8b8] bg-[#cbcbcb] pr-[11px] pl-[5px]">
      <Fold open />
      <Svg w={13} h={12} className="ml-1.5"><path d="M6.500 6V0" stroke="#2f9a3a" strokeWidth="2.600" /><path d="M5.500 7.500L.8 10.800" stroke="#1170d6" strokeWidth="2.600" /><path d="M7.500 7.500l4.700 3.300" stroke="#c22020" strokeWidth="2.600" /></Svg>
      <b className="ml-[26px] flex-1 font-bold">Transform</b>
      <div className="flex items-center gap-[9px]">
        <button aria-label="Help"><Svg w={11} h={11}><circle cx="5.500" cy="5.500" r="5.200" fill="#555" /><path d="M3.800 4.200a1.700 1.700 0 1 1 2.600 1.400c-.7.4-.9.6-.9 1.200M5.500 8v1.200" stroke="#ccc" strokeWidth="1.300" /></Svg></button>
        <button aria-label="Presets"><Svg w={12} h={11}><path d="M0 3h7M9.500 3H12M7.700.5v5M0 8h3M5.500 8H12M4 5.500v5" stroke="#555" strokeWidth="1.200" /></Svg></button>
        <button aria-label="Component menu" className="ml-[3px]"><Kebab /></button>
      </div>
    </div>
    <div className="flex flex-col border-b border-[#7f7f7f] pt-1 pb-2">
      <VecRow name="Position" v="0" bold />
      <div className="mt-1 mb-0.5"><VecRow name="Rotation" v="0" bold /></div>
      <VecRow name="Scale" v="1" />
    </div>
    <button className={btn + "mx-auto mt-2 !h-6 w-2/3 rounded-[3px]"}>Add Component</button>
  </section>
);

export default function App() {
  return (
    <div className="relative flex h-screen flex-col overflow-hidden bg-[#8a8a8a] font-['Inter','Noto_Sans_CJK_SC',sans-serif] text-[12px] leading-4 text-[#090909]">
      <Chrome />
      <Toolbar />
      <main className="grid min-h-0 flex-1 grid-cols-[1033fr_539fr_344fr] gap-0.5">
        <div className="grid min-h-0 min-w-0 grid-rows-[720fr_223fr] gap-0.5"><Scene /><Animation /></div>
        <div className="grid min-h-0 min-w-0 grid-rows-[519fr_424fr] gap-0.5"><Hierarchy /><Project /></div>
        <Inspector />
      </main>
      <footer className="flex h-[22px] shrink-0 items-center justify-between pr-[30px] pl-0.5">
        <span className="flex items-center gap-1">
          <Svg w={14} h={15}><path d="M7 .5a6.300 6.300 0 1 1 0 12.800A6.300 6.300 0 0 1 7 .5zM9 12l4 3V8z" fill="#fff" /><path d="M6.200 3h1.800v5H6.200zM6.200 9h1.800v1.800H6.200z" fill="#444" /></Svg>
          There are 2 audio listeners in the scene. Please ensure there is always exactly one audio listener in the scene.
        </span>
        <span>Auto Generate Lighting Off</span>
      </footer>
      <span className="pointer-events-none absolute right-2.5 bottom-2 font-['Liberation_Sans',sans-serif] text-[16px] leading-6 text-white/70 [text-shadow:0_0_2px_#555]">https://blog.csdn.net/yxl219</span>
    </div>
  );
}
